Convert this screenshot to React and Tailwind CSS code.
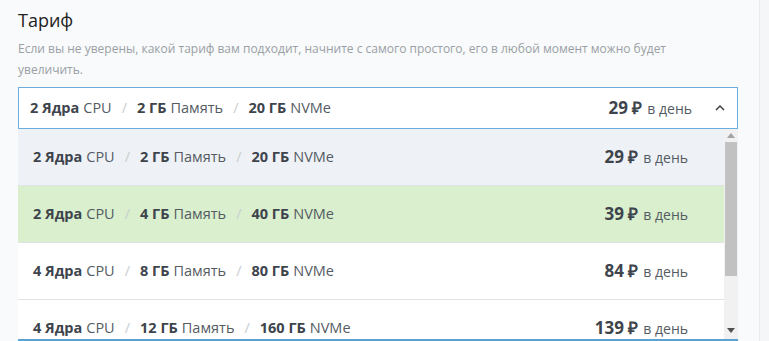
import React from 'react';

const plans = [
  { cpu: '2 Ядра', ram: '2 ГБ', disk: '20 ГБ', price: '29', bg: 'bg-[#eef2f6]' },
  { cpu: '2 Ядра', ram: '4 ГБ', disk: '40 ГБ', price: '39', bg: 'bg-[#d9efcd]' },
  { cpu: '4 Ядра', ram: '8 ГБ', disk: '80 ГБ', price: '84', bg: 'bg-white' },
  { cpu: '4 Ядра', ram: '12 ГБ', disk: '160 ГБ', price: '139', bg: 'bg-white' },
];

const Spec = ({ plan }) => (
  <div className="flex items-center text-[14.5px] text-[#555b63]">
    <b className="font-bold text-[#3e444c]">{plan.cpu}</b>
    <span className="ml-1">CPU</span>
    <span className="mx-[10px] text-[#c9cdd1]">/</span>
    <b className="font-bold text-[#3e444c]">{plan.ram}</b>
    <span className="ml-1">Память</span>
    <span className="mx-[10px] text-[#c9cdd1]">/</span>
    <b className="font-bold text-[#3e444c]">{plan.disk}</b>
    <span className="ml-1">NVMe</span>
  </div>
);

const Price = ({ value }) => (
  <div className="flex items-baseline text-[#3e444c]">
    <b className="text-[17px] font-bold">{value} ₽</b>
    <span className="ml-[5px] text-[14px] text-[#555b63]">в день</span>
  </div>
);

const App = () => {
  return (
    <div className="flex w-[769px] h-[341px] overflow-hidden bg-[#f5f6f7] font-['Open_Sans',sans-serif]">
      <div className="w-[760px] shrink-0 border-r border-[#e9ebed] bg-[#f8fafb] pl-[18px] pr-[21px] pt-[6px]">
        <h2 className="text-[18px] leading-[28px] text-[#222]">Тариф</h2>
        <p className="mt-[4px] text-[12px] leading-[21px] text-[#9a9fa5]">
          Если вы не уверены, какой тариф вам подходит, начните с самого простого, его в любой момент можно будет
          <br />
          увеличить.
        </p>
        <div className="mt-[7px] flex h-[42px] items-center border border-[#6aaee0] bg-white pl-[11px] pr-[11px]">
          <Spec plan={plans[0]} />
          <div className="ml-auto mr-[22px]">
            <Price value={plans[0].price} />
          </div>
          <svg width="12" height="8" viewBox="0 0 12 8" className="text-[#333]">
            <path d="M2 6 L6 2 L10 6" fill="none" stroke="currentColor" strokeWidth="1.4" />
          </svg>
        </div>
        <div className="flex h-[213px] border-b-[3px] border-[#5ba3d3] bg-white">
          <div className="flex-1 overflow-hidden">
            {plans.map((p, i) => (
              <div
                key={i}
                className={`flex h-[57px] items-center border-b border-[#dfe3e6] pl-[15px] pr-[36px] ${p.bg}`}
              >
                <Spec plan={p} />
                <div className="ml-auto">
                  <Price value={p.price} />
                </div>
              </div>
            ))}
          </div>
          <div className="flex w-[14px] flex-col items-center bg-[#f1f1f1]">
            <svg width="8" height="5" viewBox="0 0 8 5" className="mt-[4px] mb-[4px]">
              <path d="M0 5 L4 0 L8 5 Z" fill="#a3a3a3" />
            </svg>
            <div className="h-[134px] w-[12px] bg-[#c1c1c1]" />
            <div className="flex-1" />
            <svg width="8" height="5" viewBox="0 0 8 5" className="mb-[6px]">
              <path d="M0 0 L8 0 L4 5 Z" fill="#505050" />
            </svg>
          </div>
        </div>
      </div>
    </div>
  );
};

export default App;
